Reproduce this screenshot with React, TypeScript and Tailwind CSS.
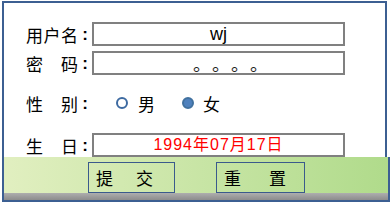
import React from 'react';

const CJK = '"Noto Sans CJK SC", sans-serif';
const LATIN = '"Liberation Sans", "Noto Sans CJK SC", sans-serif';

const Label = ({ chars }: { chars: string[] }) => (
  <div className="flex items-center text-[17px] text-black" style={{ fontFamily: CJK }}>
    <div className="w-[52px] flex justify-between leading-none">
      {chars.map((c, i) => (
        <span key={i}>{c}</span>
      ))}
    </div>
    <span className="w-[14px] text-center leading-none font-bold" style={{ fontFamily: LATIN }}>
      :
    </span>
  </div>
);

const Radio = ({ checked }: { checked?: boolean }) => (
  <span
    className={`inline-block w-[12px] h-[12px] rounded-full border-2 ${
      checked ? 'bg-[#4f81bd] border-[#41719f]' : 'bg-white border-[#3d6aa1]'
    }`}
  />
);

export default function App() {
  return (
    <div className="w-[391px] h-[204px] bg-white pl-[2px] pt-[1px]">
      <div className="w-[385px] h-[156px] border-t-2 border-x-2 border-[#3c5f92] bg-white pl-[22px] pt-[19px]">
        <div className="flex items-center h-[24px]">
          <Label chars={['用', '户', '名']} />
          <div
            className="w-[253px] h-[24px] border-2 border-[#808080] flex items-center justify-center text-[18px] text-black"
            style={{ fontFamily: LATIN }}
          >
            wj
          </div>
        </div>
        <div className="flex items-center h-[24px] mt-[5px]">
          <Label chars={['密', '码']} />
          <div
            className="w-[253px] h-[24px] border-2 border-[#808080] flex items-center pl-[99px] text-[18px] text-[#222]"
            style={{ fontFamily: CJK }}
          >
            {['。', '。', '。', '。'].map((c, i) => (
              <span key={i} className="w-[19px] leading-none">
                {c}
              </span>
            ))}
          </div>
        </div>
        <div className="flex items-center h-[24px] mt-[16px]">
          <Label chars={['性', '别']} />
          <div className="flex items-center ml-[24px] text-[17px] text-black" style={{ fontFamily: CJK }}>
            <Radio />
            <span className="ml-[10px] leading-none">男</span>
            <span className="ml-[27px] flex items-center">
              <Radio checked />
            </span>
            <span className="ml-[9px] leading-none">女</span>
          </div>
        </div>
        <div className="flex items-center h-[24px] mt-[18px]">
          <Label chars={['生', '日']} />
          <div
            className="w-[253px] h-[24px] border-2 border-[#808080] flex items-center justify-center text-[16px] tracking-[1px] text-[#ff0000]"
            style={{ fontFamily: LATIN }}
          >
            1994年07月17日
          </div>
        </div>
      </div>
      <div className="w-[388px] border-x-2 border-b-2 border-[#3c5f92]">
        <div className="h-[36px] bg-gradient-to-r from-[#e1efc0] to-[#b0db8b] flex items-end pl-[84px]">
          <button
            className="w-[87px] h-[31px] border border-[#3a5a8c] flex items-center pl-[7px] gap-[23px] text-[17px] text-black"
            style={{ fontFamily: CJK }}
          >
            <span>提</span>
            <span>交</span>
          </button>
          <button
            className="ml-[41px] w-[89px] h-[31px] border border-[#3a5a8c] flex items-center pl-[7px] gap-[28px] text-[17px] text-black"
            style={{ fontFamily: CJK }}
          >
            <span>重</span>
            <span>置</span>
          </button>
        </div>
        <div className="h-[7px] bg-gradient-to-b from-[#aeaeae] to-[#8c8c8c]" />
      </div>
    </div>
  );
}
